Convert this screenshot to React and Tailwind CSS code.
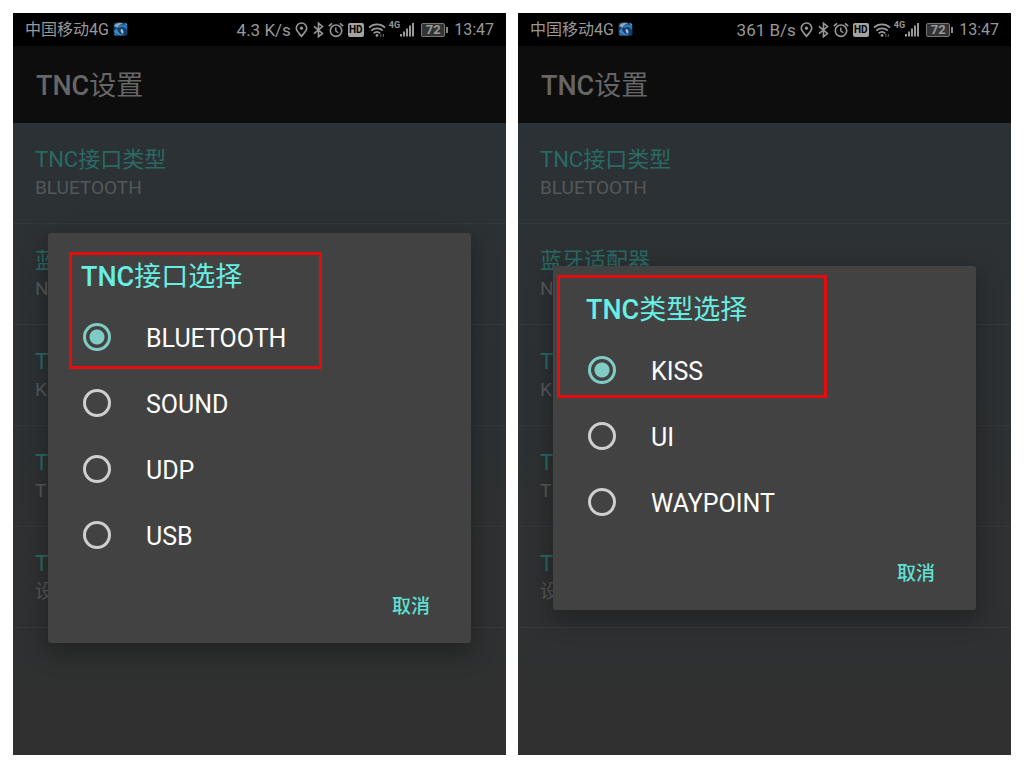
import { useState } from 'react'

const settings = [
  { title: 'TNC接口类型', value: 'BLUETOOTH' },
  { title: '蓝牙适配器', value: 'NONE' },
  { title: 'TNC类型', value: 'KISS' },
  { title: 'TNC参数', value: 'T' },
  { title: 'TNC设置', value: '设置' },
]

function AppBadge() {
  return (
    <svg viewBox="0 0 15 15" className="ml-1 h-[15px] w-[15px]" aria-hidden="true">
      <rect x="0.5" y="0.5" width="14" height="13.5" rx="3" fill="#123f70" />
      <path d="M1 4C3 0.5 8 0 10 2C7 2 5 4 5 6Z" fill="#8fa3b3" />
      <path d="M5 5C8 2 12 2 14 4V8C12 5 9 4 7 6Z" fill="#2f78b4" />
      <path d="M4 6C4 9 6 12 11 13C7 14 2 13 1 9Z" fill="#3d86bd" />
      <path d="M8 7C10 7 11 9 10 12C8 11 7 9 8 7Z" fill="#a9bac7" />
      <path d="M12 1.5L14 3M1.5 12L3 13.5" stroke="#9aa7b0" strokeWidth="1" />
    </svg>
  )
}

function PinIcon() {
  return (
    <svg viewBox="0 0 13 16" className="h-4 w-[13px]" fill="none" stroke="currentColor" aria-hidden="true">
      <path d="M6.5 14.3C4.5 11.5 1.3 9 1.3 6.2a5.2 5.2 0 0 1 10.4 0C11.7 9 8.5 11.5 6.5 14.3Z" strokeWidth="1.6" />
      <circle cx="6.5" cy="6.2" r="1.6" fill="currentColor" stroke="none" />
    </svg>
  )
}

function BluetoothIcon() {
  return (
    <svg viewBox="0 0 11 16" className="ml-[5px] h-4 w-[11px]" fill="none" stroke="currentColor" strokeWidth="1.6" aria-hidden="true">
      <path d="M1 4.3L9.5 11.5L5.5 14.7V1.3L9.5 4.5L1 11.7" />
    </svg>
  )
}

function AlarmIcon() {
  return (
    <svg viewBox="0 0 16 16" className="ml-1 h-4 w-4" fill="none" stroke="currentColor" aria-hidden="true">
      <circle cx="8" cy="8.7" r="5.7" strokeWidth="1.6" />
      <path d="M7.8 5.5V9L10.3 10.8" strokeWidth="1.4" />
      <path d="M0.8 4.2L4 1.4M12 1.4L15.2 4.2" strokeWidth="1.6" />
    </svg>
  )
}

function WifiIcon() {
  return (
    <svg viewBox="0 0 18 16" className="ml-1 h-4 w-[18px]" fill="none" stroke="currentColor" strokeWidth="1.7" aria-hidden="true">
      <path d="M1 5.6C5.5 1.4 12.5 1.4 17 5.6" />
      <path d="M3.3 8.6C6.5 5.6 11.5 5.6 14.7 8.6" />
      <path d="M5.6 11.3C7.5 9.5 10.3 9.5 12.2 11.3" />
      <circle cx="9" cy="13.4" r="1.4" fill="currentColor" stroke="none" />
      <path d="M12.8 12v2.8M15.4 12v2.8" strokeWidth="1.2" opacity="0.6" />
    </svg>
  )
}

function SignalIcon() {
  return (
    <svg viewBox="0 0 14 16" className="h-4 w-[14px]" fill="currentColor" aria-hidden="true">
      <rect x="0" y="12" width="2" height="2.5" />
      <rect x="3" y="9.5" width="2" height="5" />
      <rect x="6" y="6.5" width="2" height="8" />
      <rect x="9" y="3.5" width="2" height="11" />
      <rect x="12" y="1" width="2" height="13.5" />
    </svg>
  )
}

function StatusBar({ speed }) {
  return (
    <div className="flex h-[33px] items-center justify-between bg-black px-3 text-base leading-5 text-[#999999]">
      <div className="flex items-center">
        <span>中国移动4G</span>
        <AppBadge />
      </div>
      <div className="flex items-center">
        <span className="mr-1 text-[17px]">{speed}</span>
        <PinIcon />
        <BluetoothIcon />
        <AlarmIcon />
        <span className="ml-1 flex h-[14px] w-4 items-center justify-center rounded-[2px] bg-[#a3a3a3] text-[10px] font-bold leading-none text-black">
          HD
        </span>
        <WifiIcon />
        <span className="ml-[3px] self-start text-[9px] font-bold leading-[10px]">4G</span>
        <SignalIcon />
        <span className="ml-[7px] flex h-[14px] w-6 items-center justify-center rounded-[2px] border border-[#777777] bg-[#333333] text-[13px] font-bold leading-none">
          72
        </span>
        <span className="ml-px h-[6px] w-[2px] bg-[#888888]"></span>
        <span className="ml-[6px]">13:47</span>
      </div>
    </div>
  )
}

function ChoiceDialog({ name, topic, options, markClass }) {
  const [selected, setSelected] = useState(options[0])

  return (
    <div
      role="dialog"
      aria-label={`TNC${topic}`}
      className="relative w-full rounded-[3px] bg-[#424242] shadow-[0_8px_24px_2px_rgba(0,0,0,0.3)]"
    >
      <h2 className="h-[71px] pl-[33px] pt-7 text-[27px] font-medium leading-8 text-[#68efe3]">
        TNC<span className="font-normal">{topic}</span>
      </h2>
      <div role="radiogroup" aria-label={`TNC${topic}`}>
        {options.map(option => (
          <label key={option} className="flex h-[66px] items-center gap-[35px] pl-[35px] text-[25px] text-white">
            <input
              type="radio"
              name={name}
              checked={selected === option}
              onChange={() => setSelected(option)}
              className="h-7 w-7 appearance-none rounded-full border-[3px] border-[#cfcfcf] checked:border-[#80cbc4] checked:bg-[radial-gradient(circle,#80cbc4_7px,transparent_8px)]"
            />
            <span className="pt-1">{option}</span>
          </label>
        ))}
      </div>
      <div className="flex h-[75px] items-start justify-end pr-[33px] pt-[23px]">
        <button type="button" className="px-2 text-[19px] font-medium leading-8 text-[#5fe0d5]">取消</button>
      </div>
      <div className={`pointer-events-none absolute border-[3px] border-[#e60c0c] ${markClass}`}></div>
    </div>
  )
}

function Phone({ speed, children }) {
  return (
    <section className="flex min-w-0 flex-1 flex-col overflow-hidden">
      <StatusBar speed={speed} />
      <header className="flex h-[77px] items-center bg-[#0d0d0d] pl-[23px] pt-[3px]">
        <h1 className="text-[27px] font-medium text-[#666666]">
          TNC<span className="font-normal">设置</span>
        </h1>
      </header>
      <div className="relative flex-1 bg-linear-to-b from-[#2b3135] to-[#303030]">
        <ul>
          {settings.map(item => (
            <li key={item.title} className="h-[101px] border-b border-[#34383a] pl-[22px] pt-[22px]">
              <p className="text-[22px] leading-[30px] text-[#2a6a63]">{item.title}</p>
              <p className="text-[19px] leading-[26px] text-[#55585a]">{item.value}</p>
            </li>
          ))}
        </ul>
        <div className="absolute inset-0 flex items-center px-[35px] pb-[2px]">{children}</div>
      </div>
    </section>
  )
}

export default function App() {
  return (
    <main className="flex min-h-screen gap-3 bg-white p-[13px] font-['Roboto','Noto_Sans_CJK_SC',sans-serif]">
      <Phone speed="4.3 K/s">
        <ChoiceDialog
          name="interface"
          topic="接口选择"
          options={['BLUETOOTH', 'SOUND', 'UDP', 'USB']}
          markClass="left-[21px] top-[19px] h-[117px] w-[253px]"
        />
      </Phone>
      <Phone speed="361 B/s">
        <ChoiceDialog
          name="type"
          topic="类型选择"
          options={['KISS', 'UI', 'WAYPOINT']}
          markClass="left-1 top-[9px] h-[123px] w-[270px]"
        />
      </Phone>
    </main>
  )
}
